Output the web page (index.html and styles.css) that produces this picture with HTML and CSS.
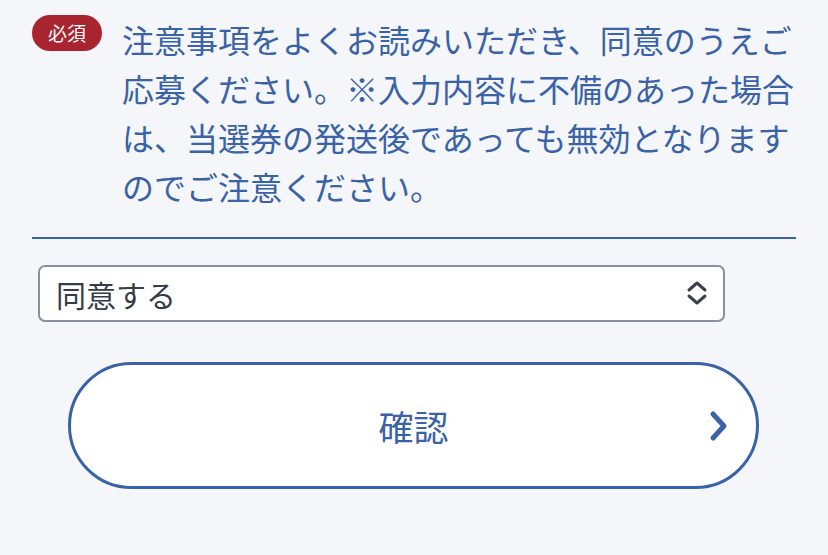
FILE: index.html
```html
<!DOCTYPE html>
<html lang="ja">
<head>
<meta charset="utf-8">
<link rel="stylesheet" href="styles.css">
</head>
<body>
<main class="form">
  <div class="notice">
    <span class="badge">必須</span>
    <p class="notice-text">注意事項をよくお読みいただき、同意のうえご応募ください。※入力内容に不備のあった場合は、当選券の発送後であっても無効となりますのでご注意ください。</p>
  </div>
  <hr class="divider">
  <div class="select-wrap">
    <select class="select">
      <option>同意する</option>
      <option>同意しない</option>
    </select>
    <svg class="select-icon" width="22" height="24" viewBox="0 0 22 24" aria-hidden="true">
      <path d="M3 9 L11 2 L19 9 M3 15 L11 22 L19 15" fill="none" stroke="#3b414c" stroke-width="3" stroke-linecap="round" stroke-linejoin="round"/>
    </svg>
  </div>
  <button class="submit" type="button">
    <span class="submit-label">確認</span>
    <svg class="submit-icon" width="20" height="32" viewBox="0 0 20 32" aria-hidden="true">
      <path d="M4 4 L15 16 L4 28" fill="none" stroke="#3a62a6" stroke-width="5" stroke-linecap="round" stroke-linejoin="round"/>
    </svg>
  </button>
</main>
</body>
</html>
```

FILE: styles.css
```css
html, body {
  margin: 0;
  padding: 0;
  background: #f4f6fa;
}
body {
  font-family: "Noto Sans CJK JP", "Noto Sans", sans-serif;
}
.form {
  width: 764px;
  padding: 16px 0 0 32px;
  display: flex;
  flex-direction: column;
}
.notice {
  display: flex;
  align-items: flex-start;
  gap: 20px;
}
.badge {
  flex: none;
  width: 70px;
  height: 36px;
  margin-top: -1px;
  border-radius: 18px;
  background: #a8242f;
  color: #ffffff;
  font-size: 19px;
  line-height: 36px;
  text-align: center;
}
.notice-text {
  margin: 0;
  width: 674px;
  color: #3a62a6;
  font-size: 32px;
  line-height: 49px;
  margin-top: -1px;
}
.divider {
  margin: 26px 0 0 0;
  border: none;
  height: 2px;
  background: #3a62a6;
}
.select-wrap {
  position: relative;
  margin: 26px 0 0 6px;
  width: 687px;
}
.select {
  display: block;
  width: 100%;
  height: 57px;
  box-sizing: border-box;
  padding: 0 0 0 16px;
  border: 2px solid #8b919c;
  border-radius: 7px;
  background: #ffffff;
  color: #363c47;
  font-family: "Noto Sans CJK JP", "Noto Sans", sans-serif;
  font-size: 30px;
  appearance: none;
  -webkit-appearance: none;
  outline: none;
}
.select-icon {
  position: absolute;
  right: 17px;
  top: 16px;
  pointer-events: none;
}
.submit {
  margin: 40px 0 0 36px;
  width: 691px;
  height: 127px;
  box-sizing: border-box;
  border: 3px solid #3a62a6;
  border-radius: 64px;
  background: #ffffff;
  display: flex;
  align-items: center;
  justify-content: center;
  position: relative;
  padding: 0;
  font-family: "Noto Sans CJK JP", "Noto Sans", sans-serif;
}
.submit-label {
  color: #3a62a6;
  font-size: 35px;
  line-height: 1;
}
.submit-icon {
  position: absolute;
  right: 27px;
  top: 45px;
}
```
